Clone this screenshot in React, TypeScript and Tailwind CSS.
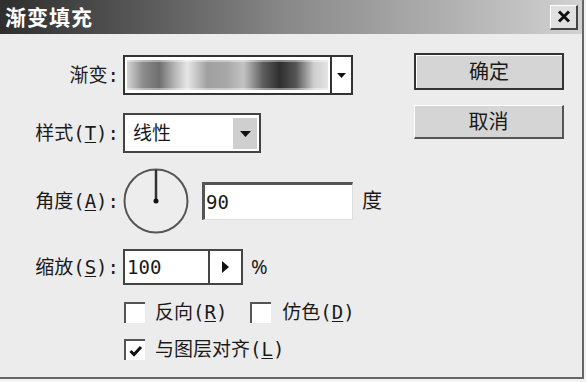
const font = { fontFamily: '"DejaVu Sans Mono", "Noto Sans CJK SC", sans-serif' }

function Key({ k }: { k: string }) {
  return <span className="underline underline-offset-2">{k}</span>
}

function Label({ children }: { children: React.ReactNode }) {
  return (
    <div className="w-[121px] shrink-0 pr-[2px] text-right text-[19px] leading-[24px] text-[#1a1a1a]">
      {children}
    </div>
  )
}

function Checkbox({ checked }: { checked?: boolean }) {
  return (
    <div className="flex h-[21px] w-[21px] items-center justify-center border-t-2 border-l-2 border-[#555] bg-white">
      {checked && (
        <svg width="14" height="12" viewBox="0 0 14 12">
          <path d="M1.5 6 L5 9.5 L12 2" fill="none" stroke="#111" strokeWidth="3" />
        </svg>
      )}
    </div>
  )
}

export default function App() {
  return (
    <div className="h-[382px] w-[586px] bg-[#f3f3f3]" style={font}>
      <div className="flex h-[379px] w-[584px] flex-col border-r-2 border-b-2 border-[#666] bg-[#ececec]">
        {/* title bar */}
        <div className="flex h-[34px] shrink-0 items-center justify-between bg-gradient-to-r from-[#2e2e2e] via-[#8a8a8a] to-[#d2d2d2] pl-[5px] pr-[4px]">
          <span className="text-[21px] font-bold tracking-[1px] text-white" style={{ fontFamily: '"Noto Sans CJK SC", sans-serif' }}>
            渐变填充
          </span>
          <button className="flex h-[25px] w-[28px] items-center justify-center border-t border-l border-white border-r-2 border-b-2 border-r-[#444] border-b-[#444] bg-[#e0e0e0]">
            <svg width="14" height="13" viewBox="0 0 14 13">
              <path d="M2 1.5 L12 11.5 M12 1.5 L2 11.5" stroke="#111" strokeWidth="3" />
            </svg>
          </button>
        </div>

        <div className="flex">
          {/* form */}
          <div className="flex flex-col">
            <div className="mt-[21px] flex items-center">
              <Label>渐变:</Label>
              <div className="ml-[2px] flex h-[40px] w-[230px] border-2 border-[#333] bg-white">
                <div className="relative flex-1 border-r-2 border-[#333]">
                  <div
                    className="absolute inset-x-[2px] inset-y-[3px]"
                    style={{
                      background:
                        'linear-gradient(to right, #d4d4d4 0%, #8c8c8c 8%, #6e6e6e 16%, #b8b8b8 24%, #e6e6e6 30%, #a0a0a0 40%, #a8a8a8 50%, #c4c4c4 58%, #5a5a5a 68%, #2f2f2f 76%, #555 84%, #cfcfcf 93%, #e4e4e4 100%)',
                    }}
                  />
                  <div className="absolute inset-x-[2px] top-[3px] h-[2px] bg-white/40" />
                  <div className="absolute inset-x-[2px] bottom-[3px] h-[2px] bg-white/40" />
                </div>
                <div className="flex w-[19px] items-center justify-center">
                  <svg width="9" height="5" viewBox="0 0 9 5">
                    <path d="M0 0 H9 L4.5 5 Z" fill="#111" />
                  </svg>
                </div>
              </div>
            </div>

            <div className="mt-[18px] flex items-center">
              <Label>
                样式(<Key k="T" />):
              </Label>
              <div className="ml-[2px] flex h-[40px] w-[138px] items-center border-2 border-[#444] bg-white pr-[2px]">
                <span className="flex-1 pl-[8px] text-[19px] text-[#1a1a1a]">线性</span>
                <div className="flex h-[32px] w-[25px] items-center justify-center border-t border-l border-white bg-[#cfcfcf]">
                  <svg width="11" height="6" viewBox="0 0 11 6">
                    <path d="M0 0 H11 L5.5 6 Z" fill="#111" />
                  </svg>
                </div>
              </div>
            </div>

            <div className="mt-[14px] flex items-center">
              <Label>
                角度(<Key k="A" />):
              </Label>
              <svg width="68" height="68" viewBox="0 0 68 68" className="ml-[1px]">
                <circle cx="34" cy="34" r="31.5" fill="#ededed" stroke="#555" strokeWidth="2" />
                <line x1="34" y1="3" x2="34" y2="34" stroke="#333" strokeWidth="2.5" />
                <circle cx="34" cy="34" r="2.5" fill="#111" />
              </svg>
              <div className="ml-[12px] flex h-[38px] w-[151px] items-center border-t-[3px] border-l-[3px] border-t-[#555] border-l-[#555] border-r border-b border-[#ddd] bg-white pl-[1px] text-[19px] text-[#1a1a1a]">
                90
              </div>
              <span className="ml-[9px] text-[20px] text-[#1a1a1a]">度</span>
            </div>

            <div className="mt-[14px] flex items-center">
              <Label>
                缩放(<Key k="S" />):
              </Label>
              <div className="ml-[2px] flex h-[36px] w-[120px] border-2 border-[#444] bg-white">
                <span className="flex flex-1 items-center pl-[2px] text-[19px] text-[#1a1a1a]">100</span>
                <div className="flex w-[33px] items-center justify-center border-l-2 border-[#444]">
                  <svg width="7" height="12" viewBox="0 0 7 12">
                    <path d="M0 0 L7 6 L0 12 Z" fill="#111" />
                  </svg>
                </div>
              </div>
              <span className="ml-[8px] text-[20px] text-[#1a1a1a]" style={{ fontFamily: '"Noto Sans", sans-serif' }}>
                %
              </span>
            </div>

            <div className="mt-[17px] flex h-[21px] items-center pl-[124px]">
              <Checkbox />
              <span className="ml-[10px] text-[19px] leading-[21px] text-[#1a1a1a]">
                反向(<Key k="R" />)
              </span>
              <div className="ml-[23px]">
                <Checkbox />
              </div>
              <span className="ml-[11px] text-[19px] leading-[21px] text-[#1a1a1a]">
                仿色(<Key k="D" />)
              </span>
            </div>

            <div className="mt-[16px] flex h-[21px] items-center pl-[124px]">
              <Checkbox checked />
              <span className="ml-[10px] text-[19px] leading-[21px] text-[#1a1a1a]">
                与图层对齐(<Key k="L" />)
              </span>
            </div>
          </div>

          {/* buttons */}
          <div className="ml-auto mr-[18px] mt-[19px] flex flex-col gap-[15px]">
            <button className="h-[37px] w-[150px] border-2 border-[#333] bg-[#d5d5d5] text-[20px] text-[#1a1a1a] shadow-[inset_1px_1px_0_#fff]">
              确定
            </button>
            <button className="h-[34px] w-[150px] border-t border-l border-white border-r-2 border-b-2 border-r-[#555] border-b-[#555] bg-[#d5d5d5] text-[20px] text-[#1a1a1a]">
              取消
            </button>
          </div>
        </div>
      </div>
    </div>
  )
}
